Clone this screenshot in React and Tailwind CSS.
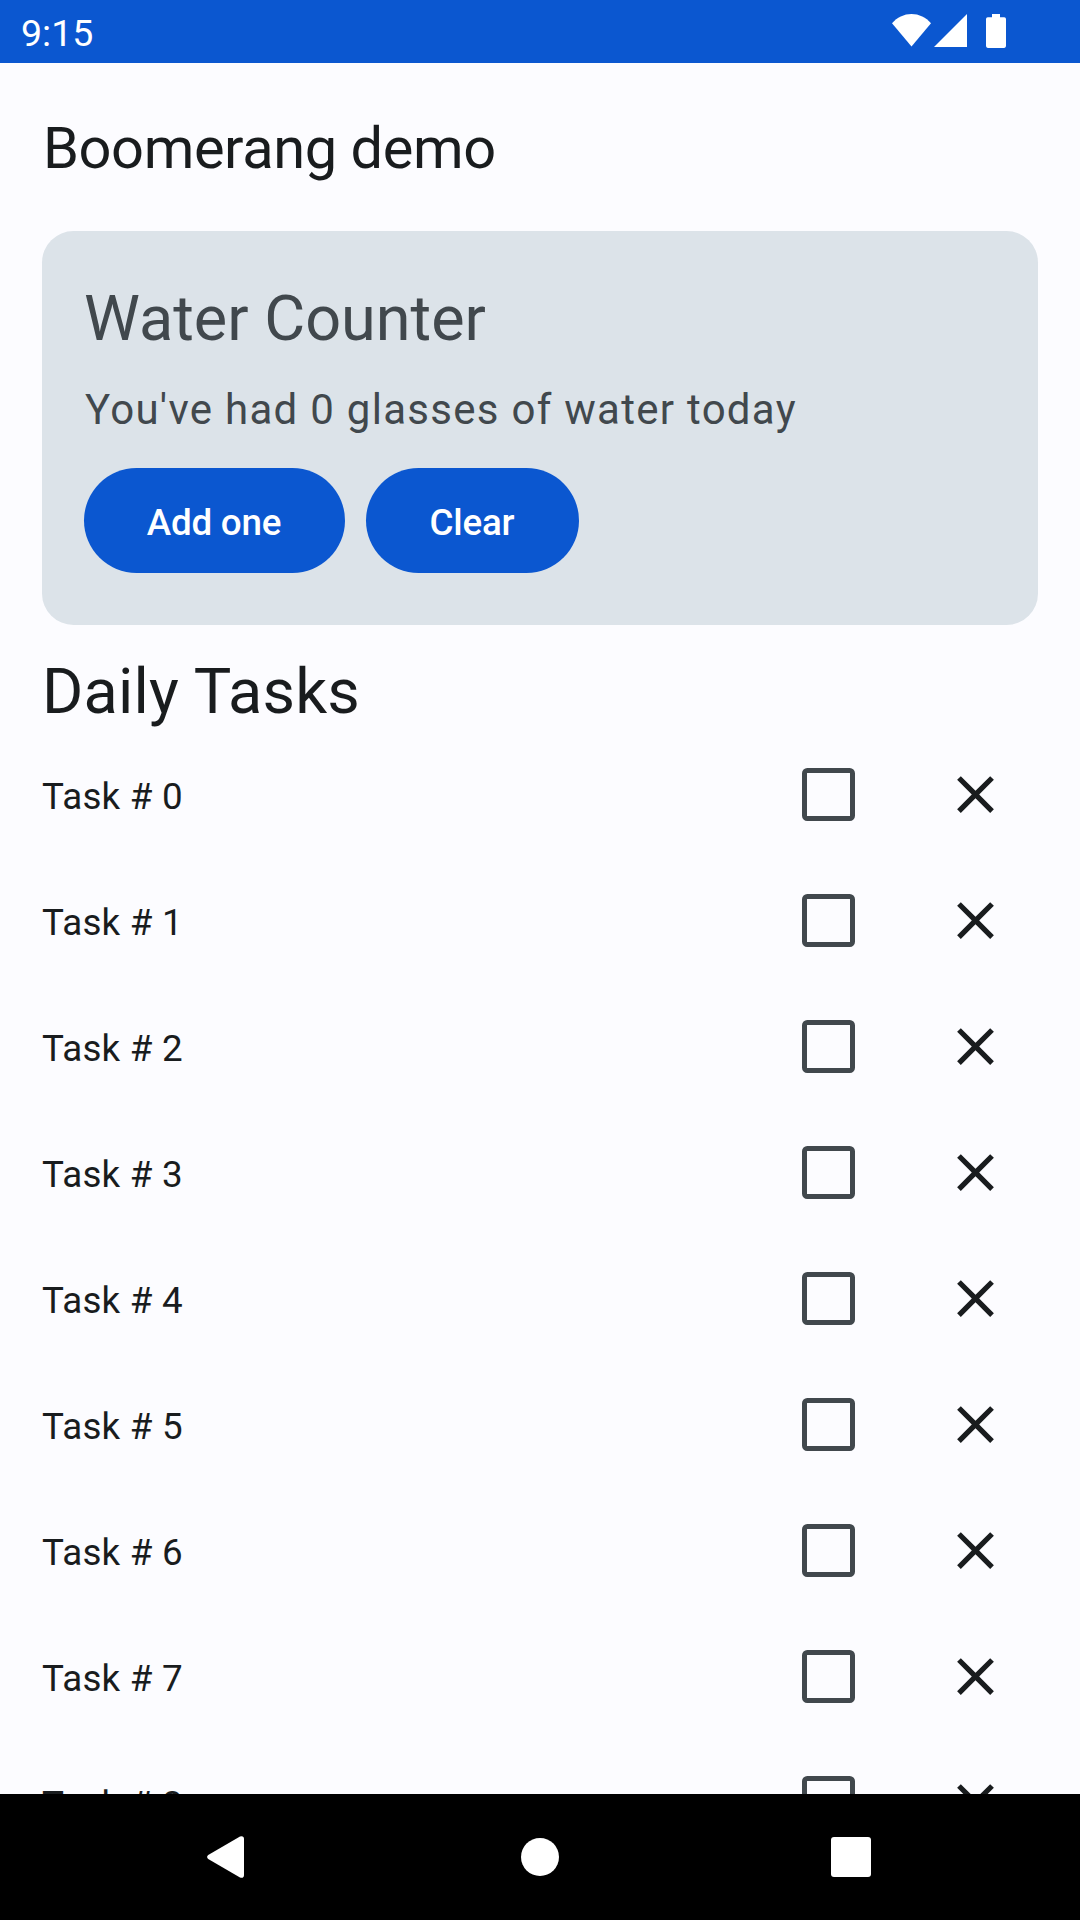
const TASKS = Array.from({ length: 9 }, (_, i) => `Task # ${i}`);

function StatusBar() {
  return (
    <header className="flex h-[63px] shrink-0 items-center bg-[#0b57d0] pl-[21px] text-white">
      <span className="pt-[4px] text-[37.5px] leading-[43px]">9:15</span>
      <div className="ml-auto flex h-full items-start pr-[74px] pt-[14px]">
        <svg width="39" height="33" viewBox="0 0 39 33" fill="currentColor">
          <path d="M19.5 32.5 0 9.2C5 3.4 12 0 19.5 0S34 3.4 39 9.2Z" />
        </svg>
        <svg className="ml-[3px]" width="33" height="33" viewBox="0 0 33 33" fill="currentColor">
          <path d="M33 0V33H0Z" />
        </svg>
        <svg className="ml-[19px]" width="20" height="34" viewBox="0 0 20 34" fill="currentColor">
          <path d="M6 0h8v3.3h4.2a1.8 1.8 0 0 1 1.8 1.8v27a1.8 1.8 0 0 1-1.8 1.8H1.8A1.8 1.8 0 0 1 0 32.100V5.100a1.8 1.8 0 0 1 1.8-1.800H6Z" />
        </svg>
      </div>
    </header>
  );
}

function PillButton({ children, className }) {
  return (
    <button
      className={`h-[105px] rounded-full bg-[#0b57d0] pt-[5px] pr-[1px] text-[36.75px] font-medium tracking-[-0.2px] text-white ${className}`}
    >
      {children}
    </button>
  );
}

function WaterCounter() {
  return (
    <section className="mx-[42px] h-[394px] shrink-0 rounded-[31.5px] bg-[#dce3e9] px-[42px] pt-[46px] text-[#41484d]">
      <h2 className="text-[63px] leading-[84px]">Water Counter</h2>
      <p className="mt-[17px] pl-[1px] text-[42px] leading-[63px] tracking-[1.28px]">
        You've had 0 glasses of water today
      </p>
      <div className="mt-[27px] flex gap-[21px]">
        <PillButton className="w-[261px]">Add one</PillButton>
        <PillButton className="w-[213px]">Clear</PillButton>
      </div>
    </section>
  );
}

function TaskRow({ label }) {
  return (
    <li className="flex h-[126px] shrink-0 items-center">
      <span className="grow pt-[5px] text-[36.75px] leading-[52px] tracking-[0.25px]">{label}</span>
      <div className="mr-[21px] flex size-[126px] items-center justify-center">
        <span role="checkbox" aria-checked="false" className="size-[53px] rounded-[5.25px] border-5 border-[#41484d]" />
      </div>
      <button aria-label="Close" className="flex size-[126px] items-center justify-center">
        <svg width="63" height="63" viewBox="0 0 24 24" fill="currentColor">
          <path d="M19 6.41L17.59 5 12 10.59 6.41 5 5 6.41 10.59 12 5 17.59 6.41 19 12 13.41 17.59 19 19 17.59 13.41 12z" />
        </svg>
      </button>
    </li>
  );
}

function NavBar() {
  return (
    <nav className="flex h-[126px] shrink-0 items-center bg-black text-white">
      <svg className="ml-[207px]" width="37" height="42" viewBox="0 0 37 42" fill="currentColor">
        <path d="M1.200 19 33 .4Q37-.6 37 3V39Q37 42.600 33 41.600L1.200 23Q-1 21 1.200 19Z" />
      </svg>
      <span className="ml-[277px] size-[38px] rounded-full bg-white" />
      <span className="ml-[272px] size-[40px] rounded-[3px] bg-white" />
    </nav>
  );
}

export default function App() {
  return (
    <div className="flex h-[1920px] w-[1080px] flex-col overflow-hidden bg-[#fcfcff] font-[Roboto,sans-serif] text-[#191c1e]">
      <StatusBar />
      <h1 className="mx-[42px] flex h-[168px] shrink-0 items-center pl-[1px] pt-[3px] text-[57.75px] leading-[73px] tracking-[-0.4px]">
        Boomerang demo
      </h1>
      <WaterCounter />
      <main className="flex min-h-0 grow flex-col overflow-hidden px-[42px] pt-[25px]">
        <h2 className="h-[81px] shrink-0 text-[63px] leading-[84px] tracking-[0.2px]">Daily Tasks</h2>
        <ul className="flex flex-col">
          {TASKS.map((label) => (
            <TaskRow key={label} label={label} />
          ))}
        </ul>
      </main>
      <NavBar />
    </div>
  );
}
